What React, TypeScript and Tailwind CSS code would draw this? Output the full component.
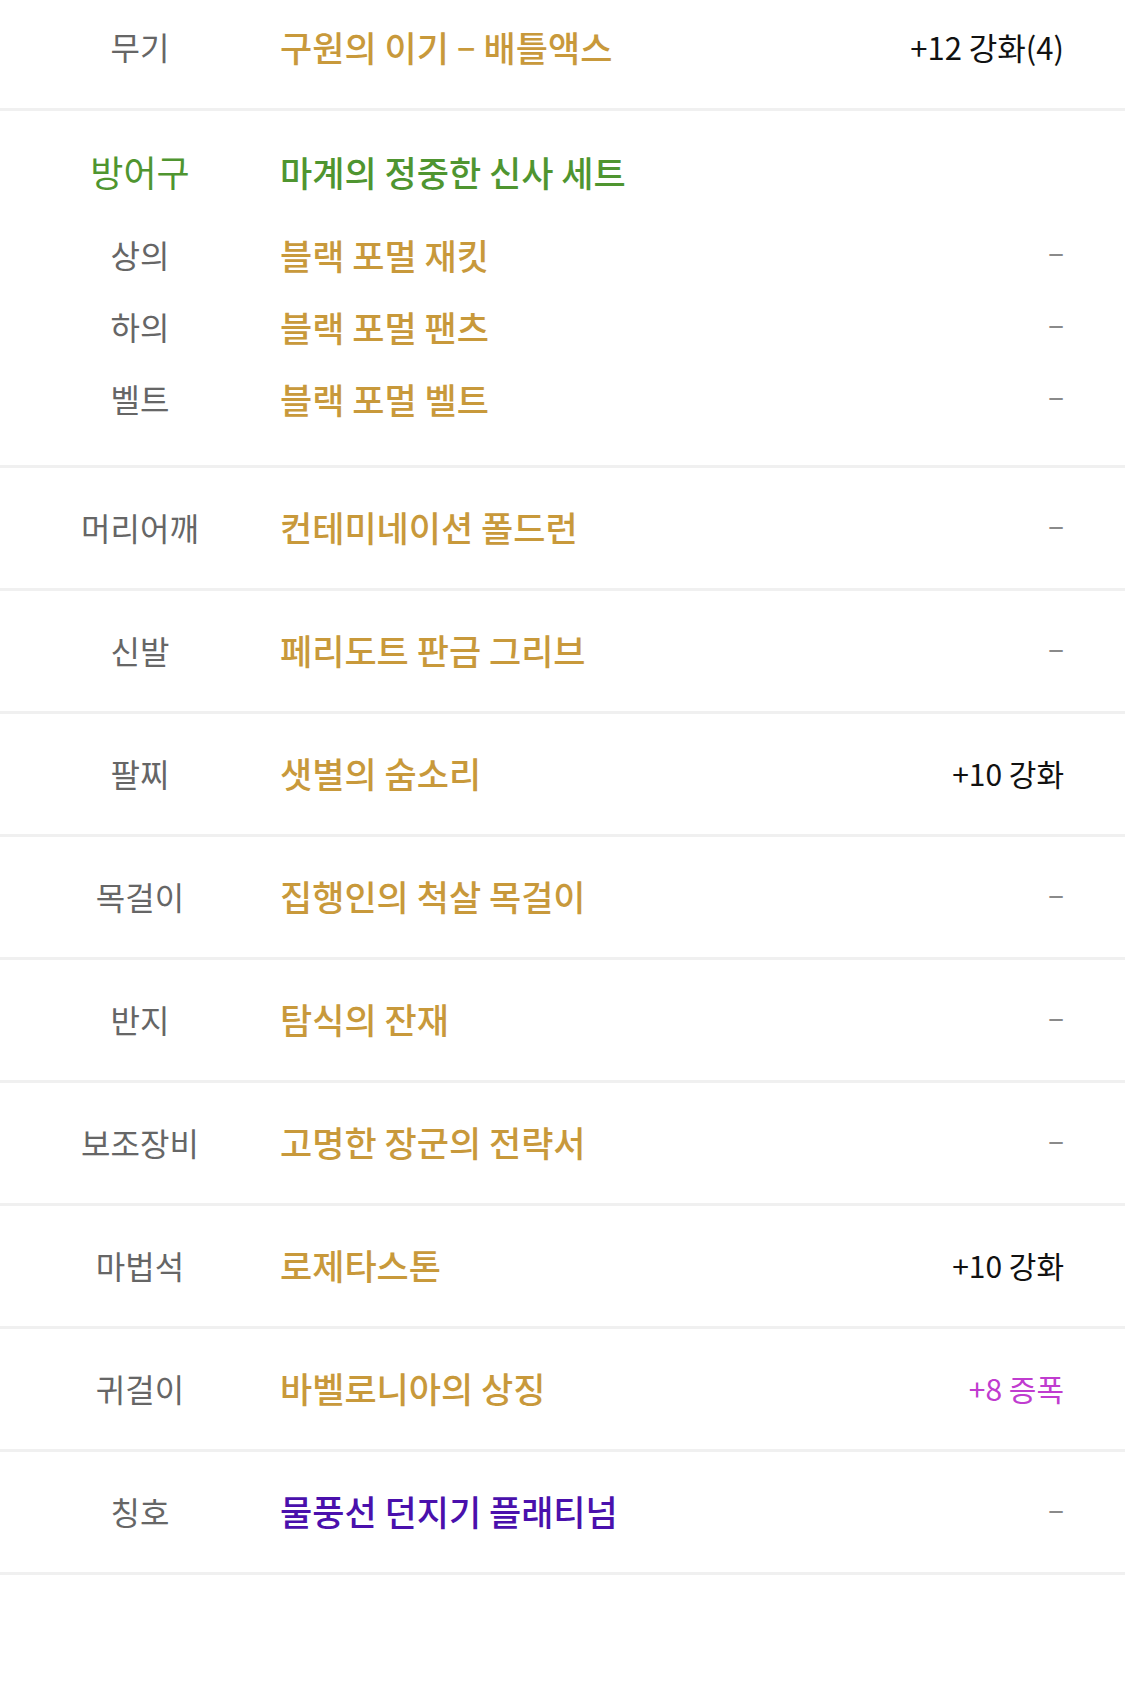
import React from 'react'

type Row = {
  label: string
  name: string
  nameColor?: string
  value?: string
  valueColor?: string
}

const rows: Row[] = [
  { label: '머리어깨', name: '컨테미네이션 폴드런' },
  { label: '신발', name: '페리도트 판금 그리브' },
  { label: '팔찌', name: '샛별의 숨소리', value: '+10 강화' },
  { label: '목걸이', name: '집행인의 척살 목걸이' },
  { label: '반지', name: '탐식의 잔재' },
  { label: '보조장비', name: '고명한 장군의 전략서' },
  { label: '마법석', name: '로제타스톤', value: '+10 강화' },
  { label: '귀걸이', name: '바벨로니아의 상징', value: '+8 증폭', valueColor: 'text-[#c03ccf]' },
  { label: '칭호', name: '물풍선 던지기 플래티넘', nameColor: 'text-[#4a10ac]' },
]

const armor = [
  { label: '상의', name: '블랙 포멀 재킷' },
  { label: '하의', name: '블랙 포멀 팬츠' },
  { label: '벨트', name: '블랙 포멀 벨트' },
]

function Value({ value, color }: { value?: string; color?: string }) {
  if (!value)
    return <span className="inline-block -translate-y-[4px] text-[30px] text-[#8a8a8a]">–</span>
  return <span className={`text-[30px] ${color ?? 'text-[#111]'}`}>{value}</span>
}

export default function App() {
  return (
    <div
      className="min-h-[1688px] w-full bg-white"
      style={{ fontFamily: '"Noto Sans CJK KR", "Noto Sans", sans-serif' }}
    >
      {/* 무기 (top of the row is scrolled out of view) */}
      <div className="flex h-[111px] items-center border-b-[3px] border-[#f0f0f0] pb-[16px] pr-[61px] leading-none">
        <div className="w-[280px] shrink-0 text-center text-[32px] text-[#666]">무기</div>
        <div className="flex-1 text-[35px] font-medium text-[#c8993b]">
          구원의 이기 <span className="inline-block -translate-y-[3px]">–</span> 배틀액스
        </div>
        <span className="text-[31px] text-[#111]">+12 강화(4)</span>
      </div>

      {/* 방어구 세트 */}
      <div className="flex flex-col border-b-[3px] border-[#f0f0f0] pb-[31px] pr-[61px] pt-[24px] leading-none">
        <div className="mb-[11px] flex h-[72px] items-center">
          <div className="w-[280px] shrink-0 text-center text-[36px] text-[#4f9530]">방어구</div>
          <div className="flex-1 text-[35px] font-medium text-[#4f9530]">마계의 정중한 신사 세트</div>
        </div>
        {armor.map((a) => (
          <div key={a.label} className="flex h-[72px] items-center">
            <div className="w-[280px] shrink-0 text-center text-[32px] text-[#666]">{a.label}</div>
            <div className="flex-1 text-[35px] font-medium text-[#c8993b]">{a.name}</div>
            <Value />
          </div>
        ))}
      </div>

      {rows.map((r) => (
        <div
          key={r.label}
          className="flex h-[123px] items-center border-b-[3px] border-[#f0f0f0] pb-[3px] pr-[61px] leading-none"
        >
          <div className="w-[280px] shrink-0 text-center text-[32px] text-[#666]">{r.label}</div>
          <div className={`flex-1 text-[35px] font-medium ${r.nameColor ?? 'text-[#c8993b]'}`}>{r.name}</div>
          <Value value={r.value} color={r.valueColor} />
        </div>
      ))}
    </div>
  )
}
